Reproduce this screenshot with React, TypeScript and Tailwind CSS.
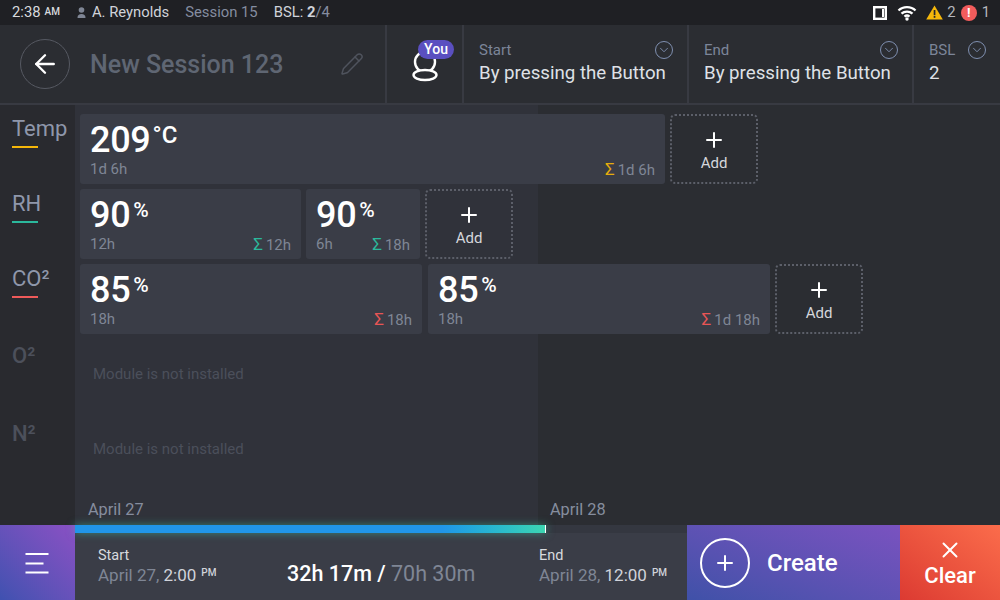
import { ArrowLeft, ChevronDown, Pencil, Plus, X } from "lucide-react";

const Card = ({ w, value, unit, time, total, color }: { w: string; value: string; unit: string; time: string; total: string; color: string }) => (
  <div className={`${w} h-[70px] shrink-0 rounded-[3px] bg-[#3a3d47] px-[10px] pt-[8px] flex flex-col`}>
    <div className="flex items-start h-[36px] text-white">
      <span className="text-[36px] leading-[36px] tracking-[-0.3px] font-medium">{value}</span>
      <span className={unit === "%" ? "text-[21px] leading-[22px] mt-[2px] ml-[3px] font-medium" : "text-[24px] leading-[24px] mt-[1px] ml-[2px] font-medium"}>{unit}</span>
    </div>
    <div className="flex justify-between text-[15px] leading-[18px] text-[#7f8695] mt-[2px]">
      <span>{time}</span>
      <span>
        <span className={`${color} text-[17px] mr-[3px]`}>Σ</span>
        {total}
      </span>
    </div>
  </div>
);

const Add = () => (
  <div className="w-[88px] h-[70px] shrink-0 rounded-[5px] border-2 border-dotted border-[#5c5f69] flex flex-col items-center pt-[12px]">
    <Plus size={24} strokeWidth={2} className="text-white" />
    <span className="text-[15px] leading-[18px] text-[#d5d7dc] mt-[2px]">Add</span>
  </div>
);

const Label = ({ text, bar, muted, top }: { text: string; bar?: string; muted?: boolean; top: string }) => (
  <div className={`h-[75px] pl-[12px] ${top} text-[22px] leading-[26px] ${muted ? "text-[#4c505b] font-medium" : "text-[#8f97ab]"}`}>
    <div>{text}</div>
    {bar && <div className={`${bar} w-[26px] h-[2px] mt-[4px]`} />}
  </div>
);

const Selector = ({ w, label, value }: { w: string; label: string; value: string }) => (
  <div className={`${w} h-full border-l-2 border-[#383a42] pl-[15px] pr-[14px] pt-[16px]`}>
    <div className="flex justify-between items-center h-[18px]">
      <span className="text-[15px] text-[#7c8599]">{label}</span>
      <span className="w-[18px] h-[18px] rounded-full border-[1.5px] border-[#7f8fb0] flex items-center justify-center">
        <ChevronDown size={14} strokeWidth={1.6} className="text-[#7f8fb0]" />
      </span>
    </div>
    <div className="text-[18.7px] leading-[24px] text-[#dfe1e6] mt-[2px] whitespace-nowrap">{value}</div>
  </div>
);

const Stamp = ({ label, date, time }: { label: string; date: string; time: string }) => (
  <div>
    <div className="text-[14.5px] leading-[18px] text-[#d8dade]">{label}</div>
    <div className="text-[17px] leading-[22px] -mt-[3px] text-[#7f8695] whitespace-nowrap">
      {date}, <span className="text-[#d0d3da]">{time}</span>
      <span className="text-[10px] text-[#d0d3da] ml-[5px] align-[5px] font-medium">PM</span>
    </div>
  </div>
);

export default function App() {
  return (
    <div className="w-[1000px] h-[600px] overflow-hidden flex flex-col bg-[#2b2d32] font-['Roboto',sans-serif]">
      {/* Status bar */}
      <div className="h-[25px] shrink-0 bg-[#1f2024] flex items-center pl-[12px] pr-[10px] text-[14.8px]">
        <span className="text-[#d8dade]">2:38</span>
        <span className="text-[10px] text-[#d8dade] ml-[4px] mb-[3px] font-medium">AM</span>
        <svg width="9" height="12" viewBox="0 0 9 12" className="ml-[17px] mr-[6px]">
          <circle cx="4.5" cy="3" r="2.8" fill="#7f8695" />
          <path d="M0.5 11c0-3 1.5-4 4-4s4 1 4 4z" fill="#7f8695" />
        </svg>
        <span className="text-[#d0d3da]">A. Reynolds</span>
        <span className="text-[#858da0] ml-[16px]">Session 15</span>
        <span className="text-[#d0d3da] ml-[16px]">
          BSL: <span className="font-bold">2</span>
          <span className="text-[#858da0]">/4</span>
        </span>
        <div className="ml-auto flex items-center">
          <svg width="14" height="14" viewBox="0 0 14 14">
            <rect x="1.2" y="1.2" width="11.6" height="11.6" fill="none" stroke="#fff" strokeWidth="2.4" />
            <rect x="9" y="3" width="2" height="8" fill="#fff" />
          </svg>
          <svg width="20" height="16" viewBox="0 0 20 16" className="ml-[10px]">
            <path d="M1.5 5.5C6 1 14 1 18.5 5.5M4.5 8.7C7.5 5.8 12.5 5.8 15.5 8.7M7.5 11.6C9 10.3 11 10.3 12.5 11.6" fill="none" stroke="#fff" strokeWidth="2.3" />
            <circle cx="10" cy="14" r="1.7" fill="#fff" />
          </svg>
          <svg width="17" height="15" viewBox="0 0 17 15" className="ml-[9px]">
            <path d="M8.5 0.5L16.8 14.5H0.2z" fill="#f5b70a" />
            <rect x="7.7" y="5" width="1.7" height="5.2" fill="#26272b" />
            <rect x="7.7" y="11" width="1.7" height="1.8" fill="#26272b" />
          </svg>
          <span className="text-[#b4b7be] ml-[4px]">2</span>
          <span className="w-[16px] h-[16px] rounded-full bg-[#f25c5c] text-white text-[13px] leading-[16px] font-bold text-center ml-[5px]">!</span>
          <span className="text-[#b4b7be] ml-[5px]">1</span>
        </div>
      </div>

      {/* Header */}
      <div className="h-[80px] shrink-0 bg-[#2b2d32] border-b-2 border-[#383a42] flex items-center">
        <div className="w-[385px] h-full flex items-center pl-[20px] pr-[21px]">
          <div className="w-[50px] h-[50px] rounded-full border border-[#565962] flex items-center justify-center">
            <ArrowLeft size={30} strokeWidth={1.9} className="text-white" />
          </div>
          <span className="text-[25px] font-medium text-[#5f6673] ml-[20px] pt-[2px]">New Session 123</span>
          <Pencil size={24} strokeWidth={1.5} className="text-[#4f535d] ml-auto" />
        </div>
        <div className="w-[77px] h-full border-l-2 border-[#383a42] flex items-center justify-center relative">
          <svg width="32" height="32" viewBox="0 0 32 32" className="mt-[3px]">
            <circle cx="16" cy="12" r="10" fill="none" stroke="#fff" strokeWidth="2.4" />
            <ellipse cx="16" cy="25" rx="11.5" ry="5" fill="#2b2d32" stroke="#fff" strokeWidth="2.4" />
          </svg>
          <span className="absolute left-[31px] top-[15px] w-[36px] h-[19px] rounded-full bg-[#5a4fc0] text-white text-[14px] leading-[19px] font-medium text-center">You</span>
        </div>
        <Selector w="w-[225px]" label="Start" value="By pressing the Button" />
        <Selector w="w-[225px]" label="End" value="By pressing the Button" />
        <Selector w="w-[88px]" label="BSL" value="2" />
      </div>

      {/* Timeline */}
      <div className="flex-1 flex min-h-0">
        <div className="w-[75px] shrink-0 pt-[8px] bg-[#292a2f]">
          <Label text="Temp" bar="bg-[#f5b70a]" top="pt-[3px]" />
          <Label text="RH" bar="bg-[#2bb89c]" top="pt-[3px]" />
          <Label text="CO²" bar="bg-[#ee5a5a]" top="pt-[3px]" />
          <Label text="O²" muted top="pt-[5px]" />
          <Label text="N²" muted top="pt-[8px]" />
        </div>
        <div className="flex-1 flex flex-col pt-[9px] bg-[linear-gradient(to_right,#30323a_463px,#2b2d32_463px)]">
          <div className="flex flex-col gap-[5px] pl-[5px]">
            <div className="flex gap-[5px]">
              <Card w="w-[585px]" value="209" unit="°C" time="1d 6h" total="1d 6h" color="text-[#e5ad0c]" />
              <Add />
            </div>
            <div className="flex gap-[5px]">
              <Card w="w-[221px]" value="90" unit="%" time="12h" total="12h" color="text-[#2bb89c]" />
              <Card w="w-[114px]" value="90" unit="%" time="6h" total="18h" color="text-[#2bb89c]" />
              <Add />
            </div>
            <div className="flex gap-[5px]">
              <Card w="w-[342px]" value="85" unit="%" time="18h" total="18h" color="text-[#e85555]" />
              <Card w="w-[342px] ml-[1px]" value="85" unit="%" time="18h" total="1d 18h" color="text-[#e85555]" />
              <Add />
            </div>
            <div className="h-[70px] flex items-center pl-[13px] text-[15px] text-[#4b4f5a]">Module is not installed</div>
            <div className="h-[70px] flex items-center pl-[13px] text-[15px] text-[#4b4f5a]">Module is not installed</div>
          </div>
          <div className="flex-1 flex items-end pb-[5px] text-[16.3px] leading-[20px] text-[#868d9e]">
            <div className="w-[463px] pl-[13px]">April 27</div>
            <div className="pl-[12px]">April 28</div>
          </div>
        </div>
      </div>

      {/* Bottom bar */}
      <div className="h-[75px] shrink-0 flex">
        <div className="w-[75px] bg-gradient-to-tr from-[#3f51b0] to-[#8a50c4] flex items-center justify-center">
          <svg width="24" height="22" viewBox="0 0 24 22" className="mr-[1px]">
            <path d="M0.5 2H23.5M0.5 11.5H18.5M0.5 20.5H23.5" stroke="#fff" strokeWidth="2" />
          </svg>
        </div>
        <div className="w-[612px] bg-[#3a3d47] flex flex-col">
          <div className="h-[8px] bg-[#343740] relative">
            <div className="w-[471px] h-full bg-gradient-to-r from-[#2196e8] from-78% to-[#3dd6b0] shadow-[0_0_8px_#3dd6b080]" />
            <div className="absolute left-[470px] top-0 w-px h-full bg-white" />
          </div>
          <div className="flex-1 flex pl-[23px] pt-[14px]">
            <div className="w-[189px]">
              <Stamp label="Start" date="April 27" time="2:00" />
            </div>
            <div className="w-[252px] text-[21.5px] leading-[28px] pt-[13px] whitespace-nowrap">
              <span className="font-medium text-white">32h 17m /</span>
              <span className="text-[#7f8695]"> 70h 30m</span>
            </div>
            <Stamp label="End" date="April 28" time="12:00" />
          </div>
        </div>
        <div className="w-[213px] bg-gradient-to-tr from-[#3f51a8] to-[#7a52c0] flex items-center pl-[13px]">
          <div className="w-[50px] h-[50px] rounded-full border-2 border-white flex items-center justify-center">
            <Plus size={24} strokeWidth={2} className="text-white" />
          </div>
          <span className="text-[24px] font-medium text-white ml-[17px]">Create</span>
        </div>
        <div className="w-[100px] bg-gradient-to-tr from-[#dc3a32] to-[#fb6c4b] flex flex-col items-center pt-[12px]">
          <X size={26} strokeWidth={1.8} className="text-white" />
          <span className="text-[22px] leading-[26px] font-medium text-white">Clear</span>
        </div>
      </div>
    </div>
  );
}
